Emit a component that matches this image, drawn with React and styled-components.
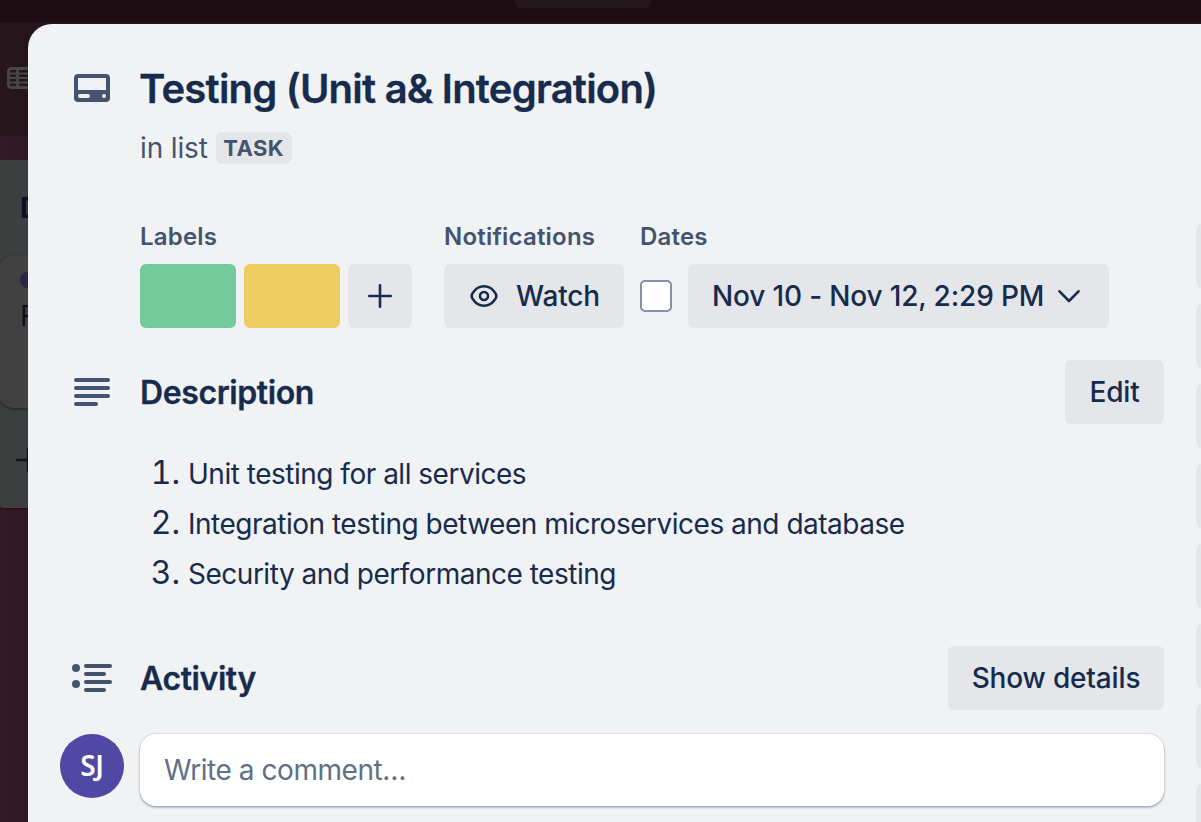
import React from "react";
import styled, { createGlobalStyle } from "styled-components";

const ink = "#172b4d";
const subtle = "#44546f";
const neutral = "#e4e6ea";

const GlobalStyle = createGlobalStyle`
  * { box-sizing: border-box; }
  html, body { margin: 0; overflow: hidden; }
  body { font-family: Inter, "Liberation Sans", sans-serif; color: ${ink}; }
  h1, h2, h3, p, ol { margin: 0; padding: 0; font: inherit; }
  button { border: 0; font: inherit; color: inherit; padding: 0; }
  svg { display: block; flex: none; }
`;

const Screen = styled.div`
  display: grid;
  grid-template: 822px / 1201px;
  width: 1201px;
  height: 822px;
  overflow: hidden;
`;

const Board = styled.div`
  grid-area: 1 / 1;
  display: flex;
  flex-direction: column;
  background: linear-gradient(90deg, #361a27 0, #2e1922 28px);
`;

const TopBar = styled.div`
  height: 22px;
  background: #1e0c13;
`;

const SearchField = styled.div`
  width: 136px;
  height: 8px;
  margin-left: 515px;
  border-radius: 0 0 6px 6px;
  background: #24171c;
`;

const BoardHeader = styled.div`
  height: 114px;
  margin-bottom: 24px;
  padding: 45px 0 0 7px;
  background: linear-gradient(90deg, #28151c 0, #23151b 28px);
`;

const List = styled.div`
  width: 300px;
  height: 348px;
  border-radius: 0 0 16px 3px;
  background: linear-gradient(90deg, #3c3f3c 0, #3d3e41 28px);
  box-shadow: 0 1px 2px rgba(0, 0, 0, 0.5);
  color: #0a1120;
`;

const ListTitle = styled.h3`
  height: 96px;
  padding: 34px 0 0 20px;
  font-size: 28px;
  line-height: 28px;
  font-weight: 700;
`;

const ListCard = styled.div`
  height: 152px;
  margin-left: -2px;
  padding: 16px 0 0 22px;
  border-radius: 16px;
  background: #414141;
  box-shadow: 0 1px 3px rgba(0, 0, 0, 0.45);
  font-size: 28px;
  line-height: 28px;
`;

const CardLabel = styled.div`
  width: 80px;
  height: 16px;
  margin-bottom: 14px;
  border-radius: 8px;
  background: #29264a;
`;

const AddCard = styled.div`
  padding: 40px 0 0 16px;
`;

const Dialog = styled.section`
  grid-area: 1 / 1;
  position: relative;
  display: flex;
  gap: 32px;
  margin: 24px 0 0 28px;
  padding-left: 32px;
  border-top-left-radius: 24px;
  background: #f0f2f4;
  overflow: hidden;
`;

const Main = styled.main`
  width: 1104px;
  flex: none;
`;

const Sidebar = styled.aside`
  display: flex;
  flex-direction: column;
  gap: 16px;
  padding-top: 200px;
  flex: none;
`;

const SideAction = styled.div`
  width: 336px;
  height: 64px;
  flex: none;
  border-radius: 6px;
  background: ${neutral};
`;

const Row = styled.div`
  display: grid;
  grid-template-columns: 80px 1fr auto;
  align-items: center;
  height: ${(p) => p.$height || 64}px;
  margin-top: ${(p) => p.$top || 0}px;
`;

const IconSlot = styled.div`
  display: flex;
  justify-content: center;
  width: 64px;
`;

const Title = styled.h1`
  padding-top: 2px;
  margin-left: -1px;
  font-size: 40px;
  line-height: 46px;
  font-weight: 600;
  letter-spacing: -0.78px;
  white-space: nowrap;
  -webkit-text-stroke: 0.3px;
`;

const Heading = styled.h2`
  padding-top: 2px;
  font-size: 32px;
  line-height: 40px;
  font-weight: 600;
  letter-spacing: -0.4px;
  -webkit-text-stroke: 0.3px;
`;

const InList = styled.p`
  display: flex;
  align-items: center;
  gap: 8px;
  height: 32px;
  margin: 20px 0 0 80px;
  color: ${subtle};
  font-size: 28px;
  letter-spacing: -0.15px;
`;

const ListName = styled.span`
  display: flex;
  align-items: center;
  justify-content: center;
  width: 76px;
  height: 32px;
  border-radius: 6px;
  background: ${neutral};
  font-size: 22px;
  font-weight: 700;
  letter-spacing: 0.4px;
`;

const Fields = styled.div`
  display: flex;
  margin: 56px 0 0 80px;
`;

const Field = styled.div`
  margin-right: ${(p) => p.$after || 0}px;
`;

const FieldName = styled.h3`
  height: 44px;
  padding-top: 1px;
  color: ${subtle};
  font-size: 24px;
  line-height: 32px;
  font-weight: 600;
  letter-spacing: 0.2px;
`;

const Controls = styled.div`
  display: flex;
  align-items: center;
  gap: ${(p) => p.$gap || 8}px;
`;

const Swatch = styled.div`
  width: 96px;
  height: 64px;
  border-radius: 6px;
  background: ${(p) => p.$color};
`;

const Button = styled.button`
  display: flex;
  align-items: center;
  justify-content: ${(p) => (p.$start ? "flex-start" : "center")};
  width: ${(p) => p.$width}px;
  height: 64px;
  padding-left: ${(p) => p.$start || 0}px;
  gap: ${(p) => p.$gap || 0}px;
  border-radius: 6px;
  background: ${neutral};
  font-size: 28px;
  font-weight: 500;
  letter-spacing: -0.16px;
  white-space: nowrap;
`;

const Checkbox = styled.div`
  width: 32px;
  height: 32px;
  border: 2px solid #8590a2;
  border-radius: 5px;
  background: #fff;
`;

const Steps = styled.ol`
  margin: 24px 0 0 80px;
  list-style: none;
`;

const Step = styled.li`
  display: grid;
  grid-template-columns: 40px auto;
  column-gap: 8px;
  align-items: baseline;
  height: 50px;
  line-height: 50px;
  white-space: nowrap;
`;

const StepNumber = styled.span`
  font-size: 32px;
  font-variant-numeric: tabular-nums;
  text-align: right;
`;

const StepText = styled.span`
  font-size: 28px;
  letter-spacing: -0.49px;
`;

const CommentRow = styled.div`
  display: flex;
  gap: 16px;
  margin-top: 24px;
`;

const Avatar = styled.div`
  display: flex;
  align-items: center;
  justify-content: center;
  width: 64px;
  height: 64px;
  padding-bottom: 3px;
  border-radius: 50%;
  background: #5048a4;
  color: #fff;
  font: 600 28px "Noto Sans", sans-serif;
  letter-spacing: -0.3px;
`;

const CommentBox = styled.div`
  flex: 1;
  height: 72px;
  padding-left: 24px;
  border-radius: 16px;
  background: #fff;
  box-shadow: 0 2px 2px rgba(9, 30, 66, 0.25), 0 0 2px rgba(9, 30, 66, 0.31);
  color: #626f86;
  font-size: 28px;
  line-height: 73px;
  letter-spacing: -0.45px;
`;

const TableIcon = () => (
  <svg width="32" height="22" fill="none" stroke="#484748" strokeWidth="2.8">
    <rect x="1.5" y="1.5" width="29" height="19" rx="2.5" />
    <path d="M1 6.500h30M1 11h30M1 15.500h30" strokeWidth="2" />
    <path d="M10.500 1v20" />
  </svg>
);

const CardIcon = () => (
  <svg width="36" height="28">
    <path
      fill={subtle}
      fillRule="evenodd"
      d="M4 0h28a4 4 0 0 1 4 4v20a4 4 0 0 1-4 4H4a4 4 0 0 1-4-4V4a4 4 0 0 1 4-4ZM4 4v12h28V4ZM6 20a2 2 0 0 0 0 4h8a2 2 0 0 0 0-4ZM30 20a2 2 0 1 0 0 4 2 2 0 0 0 0-4Z"
    />
  </svg>
);

const LinesIcon = () => (
  <svg width="36" height="28" stroke={subtle} strokeWidth="4" strokeLinecap="round">
    <path d="M2 2h32M2 10h32M2 18h32M2 26h20" />
  </svg>
);

const ActivityIcon = () => (
  <svg width="40" height="28" stroke={subtle} strokeWidth="4" strokeLinecap="round">
    <path d="M14 2h24M14 10h18M14 18h24M14 26h18" />
    <circle cx="4" cy="4" r="4" fill={subtle} stroke="none" />
    <circle cx="4" cy="20" r="4" fill={subtle} stroke="none" />
  </svg>
);

const PlusIcon = ({ color = ink }) => (
  <svg width="24" height="24" stroke={color} strokeWidth="2.6" strokeLinecap="round">
    <path d="M12 1.3v21.4M1.3 12h21.4" />
  </svg>
);

const EyeIcon = () => (
  <svg width="28" height="24" fill="none" stroke={ink} strokeWidth="2.6">
    <path d="M14 2.2c5 0 9 2.9 11.500 7.100q1.600 2.700 0 5.400C23 18.900 19 21.800 14 21.800S5 18.900 2.500 14.700q-1.600-2.700 0-5.400C5 5.100 9 2.200 14 2.200Z" />
    <circle cx="14" cy="12" r="4" />
  </svg>
);

const ChevronIcon = () => (
  <svg width="22" height="14" fill="none" stroke={ink} strokeWidth="2.6" strokeLinecap="round" strokeLinejoin="round">
    <path d="M1.500 2.300 11 12 20.500 2.300" />
  </svg>
);

const steps = [
  "Unit testing for all services",
  "Integration testing between microservices and database",
  "Security and performance testing",
];

export default function App() {
  return (
    <Screen>
      <GlobalStyle />
      <Board>
        <TopBar>
          <SearchField />
        </TopBar>
        <BoardHeader>
          <TableIcon />
        </BoardHeader>
        <List>
          <ListTitle>D</ListTitle>
          <ListCard>
            <CardLabel />
            F
          </ListCard>
          <AddCard>
            <PlusIcon color="#0d1422" />
          </AddCard>
        </List>
      </Board>

      <Dialog>
        <Main>
          <Row $top={40} $height={48}>
            <IconSlot>
              <CardIcon />
            </IconSlot>
            <Title>Testing (Unit a&amp; Integration)</Title>
          </Row>
          <InList>
            in list <ListName>TASK</ListName>
          </InList>

          <Fields>
            <Field $after={32}>
              <FieldName>Labels</FieldName>
              <Controls>
                <Swatch $color="#73ca9b" />
                <Swatch $color="#efcd61" />
                <Button $width={64}>
                  <PlusIcon />
                </Button>
              </Controls>
            </Field>
            <Field $after={16}>
              <FieldName>Notifications</FieldName>
              <Button $width={180} $start={26} $gap={18}>
                <EyeIcon />
                Watch
              </Button>
            </Field>
            <Field>
              <FieldName>Dates</FieldName>
              <Controls $gap={16}>
                <Checkbox />
                <Button $width={421} $start={24} $gap={14}>
                  Nov 10 - Nov 12, 2:29 PM
                  <ChevronIcon />
                </Button>
              </Controls>
            </Field>
          </Fields>

          <Row $top={32}>
            <IconSlot>
              <LinesIcon />
            </IconSlot>
            <Heading>Description</Heading>
            <Button $width={99}>Edit</Button>
          </Row>
          <Steps>
            {steps.map((text, i) => (
              <Step key={text}>
                <StepNumber>{i + 1}.</StepNumber>
                <StepText>{text}</StepText>
              </Step>
            ))}
          </Steps>

          <Row $top={48}>
            <IconSlot>
              <ActivityIcon />
            </IconSlot>
            <Heading>Activity</Heading>
            <Button $width={216}>Show details</Button>
          </Row>
          <CommentRow>
            <Avatar>SJ</Avatar>
            <CommentBox>Write a comment…</CommentBox>
          </CommentRow>
        </Main>
        <Sidebar>
          {Array.from({ length: 8 }, (_, i) => (
            <SideAction key={i} />
          ))}
        </Sidebar>
      </Dialog>
    </Screen>
  );
}
